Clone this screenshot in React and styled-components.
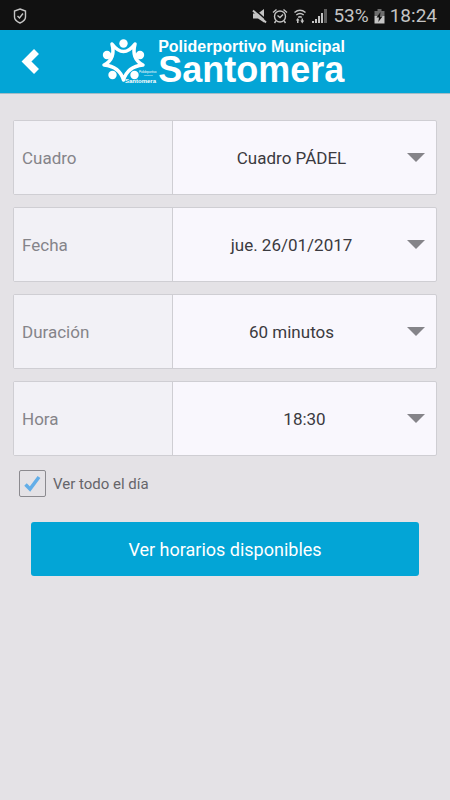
import { useState } from "react";
import styled, { createGlobalStyle } from "styled-components";

const GlobalStyle = createGlobalStyle`
  * {
    box-sizing: border-box;
  }

  body {
    margin: 0;
    background: #e4e2e6;
    font-family: Roboto, sans-serif;
  }
`;

const StatusBar = styled.div`
  display: flex;
  align-items: center;
  justify-content: space-between;
  height: 30px;
  padding: 2px 13px 0;
  background: #111111;
  color: #c4c4c4;
  font-size: 19px;
  line-height: 28px;
`;

const StatusGroup = styled.div`
  display: flex;
  align-items: center;
  gap: 5px;
`;

const Header = styled.header`
  display: grid;
  grid-template-columns: 1fr auto 1fr;
  align-items: center;
  height: 64px;
  background: #03a5d6;
  border-bottom: 1px solid #a3bcc6;
`;

const BackButton = styled.button`
  display: flex;
  justify-self: start;
  padding: 10px 20px;
  border: 0;
  background: none;
  cursor: pointer;
`;

const Brand = styled.div`
  display: flex;
  align-items: center;
`;

const Title = styled.h1`
  margin: 0;
  padding: 0 4px 1px 0;
  color: #ffffff;
  font-family: "Liberation Sans", Arial, sans-serif;
  font-weight: bold;
  font-size: 36px;
  line-height: 29px;
`;

const Subtitle = styled.span`
  display: block;
  font-size: 16px;
  line-height: 16px;
`;

const Form = styled.form`
  display: flex;
  flex-direction: column;
  padding: 26px 13px;
`;

const Fields = styled.div`
  display: flex;
  flex-direction: column;
  gap: 12px;
`;

const Row = styled.div`
  display: grid;
  grid-template-columns: 159px 1fr;
  height: 75px;
  border: 1px solid #cfced3;
  border-radius: 2px;
  background: #f9f7fd;
  font-size: 17px;
`;

const Label = styled.label`
  display: flex;
  align-items: center;
  padding-left: 8px;
  border-right: 1px solid #cfced3;
  background: #f2f1f6;
  color: #858489;
`;

const Field = styled.div`
  display: grid;
  align-items: center;

  > * {
    grid-area: 1 / 1;
  }
`;

const Select = styled.select`
  width: 100%;
  height: 100%;
  padding: 0 ${(props) => (props.$full ? "0" : "26px")} 0 0;
  border: 0;
  background: none;
  appearance: none;
  color: #3b3a40;
  font: inherit;
  text-align-last: center;
`;

const Arrow = styled.svg`
  justify-self: end;
  margin-right: 11px;
  pointer-events: none;
`;

const CheckLabel = styled.label`
  display: flex;
  align-items: center;
  gap: 7px;
  margin-top: 14px;
  padding-left: 6px;
  color: #66656a;
  font-size: 15px;
`;

const CheckBox = styled.span`
  display: grid;
  place-items: center;
  width: 27px;
  height: 27px;
  border: 1px solid #8b8a8f;
  border-radius: 2px;

  > * {
    grid-area: 1 / 1;
  }
`;

const CheckInput = styled.input`
  width: 100%;
  height: 100%;
  margin: 0;
  appearance: none;
`;

const Submit = styled.button`
  height: 54px;
  margin: 25px 18px 0;
  border: 0;
  border-radius: 3px;
  background: #03a5d6;
  color: #ffffff;
  font-family: inherit;
  font-size: 18px;
`;

const fields = [
  { id: "cuadro", label: "Cuadro", value: "Cuadro PÁDEL" },
  { id: "fecha", label: "Fecha", value: "jue. 26/01/2017" },
  { id: "duracion", label: "Duración", value: "60 minutos" },
  { id: "hora", label: "Hora", value: "18:30", full: true },
];

const ShieldIcon = () => (
  <svg width="14" height="16" viewBox="0 0 14 16" fill="none" stroke="#c4c4c4">
    <path d="M7 1 L12.5 3 V9 Q12.5 12.5 7 15 Q1.5 12.5 1.5 9 V3 Z" strokeWidth="1.4" />
    <path d="M4.5 8 L6.5 10 L10 5.5" strokeWidth="1.4" />
  </svg>
);

const MuteIcon = () => (
  <svg width="15" height="16" viewBox="0 0 15 16">
    <path d="M1 5.5 H6 L12 1 V14.5 L6 10.5 H1 Z" fill="#c4c4c4" />
    <path d="M2 1 L15 12.5" stroke="#111111" strokeWidth="1.6" />
    <path d="M1 2.5 L14 14.5" stroke="#c4c4c4" strokeWidth="2" />
  </svg>
);

const AlarmIcon = () => (
  <svg width="16" height="16" viewBox="0 0 16 16" fill="none" stroke="#c4c4c4" strokeWidth="1.4">
    <circle cx="8" cy="8.5" r="5.5" />
    <path d="M1 4.5 L4.5 1.5 M15 4.5 L11.5 1.5 M3.8 13 L2.5 15 M12.2 13 L13.5 15" />
    <path d="M5.5 7.5 L8 9.5 L11 6.5" />
  </svg>
);

const WifiIcon = () => (
  <svg width="14" height="16" viewBox="0 0 14 16" fill="none" stroke="#c4c4c4">
    <path d="M1.5 4.5 Q7 0 12.5 4.5" strokeWidth="1.5" />
    <path d="M3.3 7 Q7 4 10.7 7" strokeWidth="1.5" />
    <path d="M5.2 9.3 Q7 8 8.8 9.3" strokeWidth="1.5" />
    <path
      d="M4 15 V12.5 H2.8 L4.8 10 L6.5 12.5 H5.5 V15 Z M8.5 10.5 H10 V12.5 H11.2 L9.3 15.5 L7.3 12.5 H8.5 Z"
      fill="#c4c4c4"
      stroke="none"
    />
  </svg>
);

const SignalIcon = () => (
  <svg width="16" height="16" viewBox="0 0 16 16" fill="#c4c4c4">
    <path d="M0 13 H2 V15 H0 Z M3 11 H5 V15 H3 Z M6 8 H8 V15 H6 Z M9 5 H11 V15 H9 Z" />
    <path d="M12 1 H15 V15 H12 Z" fill="#5d5d5d" />
  </svg>
);

const BatteryIcon = () => (
  <svg width="11" height="16" viewBox="0 0 11 16">
    <path d="M3.5 1 H7.5 V3 H10.5 V8 H0.5 V3 H3.5 Z" fill="#6d6d6d" />
    <path d="M0.5 8 H10.5 V15.5 H0.5 Z" fill="#c4c4c4" />
    <path d="M6.5 4 L2.5 9.5 H5 L4.3 14 L8.5 8.5 H6 Z" fill="#111111" />
  </svg>
);

const BackIcon = () => (
  <svg width="20" height="28" viewBox="0 0 20 28">
    <path d="M16.5 3.5 L6.5 13.5 L16.5 23.5" fill="none" stroke="#ffffff" strokeWidth="7" />
  </svg>
);

const Logo = () => (
  <svg width="57" height="50" viewBox="0 0 57 50" fill="#ffffff">
    <path
      d="M11 7 Q22.5 22 34 7 Q30 22 42 28 Q26.5 29.5 22.5 43 Q18.500 29.5 3 28 Q15 22 11 7 Z"
      fill="none"
      stroke="#ffffff"
      strokeWidth="3.5"
      strokeLinejoin="round"
    />
    <circle cx="22.5" cy="6.5" r="4.2" />
    <circle cx="6" cy="18" r="4.2" />
    <circle cx="39" cy="18" r="4.2" />
    <circle cx="11.5" cy="38" r="4.2" />
    <circle cx="33.5" cy="38" r="4.2" />
    <g fontFamily="Liberation Sans">
      <text x="38" y="36" fontSize="3">Polideportivo</text>
      <text x="43" y="39" fontSize="2">Municipal</text>
      <text x="24" y="46" fontSize="6" fontWeight="bold">Santomera</text>
    </g>
  </svg>
);

const SelectRow = ({ id, label, value, full }) => (
  <Row>
    <Label htmlFor={id}>{label}</Label>
    <Field>
      <Select id={id} defaultValue={value} $full={full}>
        <option>{value}</option>
      </Select>
      <Arrow width="18" height="10" viewBox="0 0 18 10">
        <path d="M0 0 H18 L9 9 Z" fill="#858489" />
      </Arrow>
    </Field>
  </Row>
);

const App = () => {
  const [allDay, setAllDay] = useState(true);

  return (
    <>
      <GlobalStyle />
      <StatusBar>
        <ShieldIcon />
        <StatusGroup>
          <MuteIcon />
          <AlarmIcon />
          <WifiIcon />
          <SignalIcon />
          <span>53%</span>
          <BatteryIcon />
          <span>18:24</span>
        </StatusGroup>
      </StatusBar>
      <Header>
        <BackButton type="button" aria-label="Volver">
          <BackIcon />
        </BackButton>
        <Brand>
          <Logo />
          <Title>
            <Subtitle>Poliderportivo Municipal</Subtitle>
            Santomera
          </Title>
        </Brand>
      </Header>
      <Form onSubmit={(e) => e.preventDefault()}>
        <Fields>
          {fields.map((field) => (
            <SelectRow key={field.id} {...field} />
          ))}
        </Fields>
        <CheckLabel>
          <CheckBox>
            <CheckInput
              type="checkbox"
              checked={allDay}
              onChange={(e) => setAllDay(e.target.checked)}
            />
            {allDay && (
              <svg width="17" height="17" viewBox="0 0 17 17" pointerEvents="none">
                <path d="M1.5 9.5 L6 14 L15 2" fill="none" stroke="#63aee8" strokeWidth="3.5" />
              </svg>
            )}
          </CheckBox>
          Ver todo el día
        </CheckLabel>
        <Submit type="submit">Ver horarios disponibles</Submit>
      </Form>
    </>
  );
};

export default App;
